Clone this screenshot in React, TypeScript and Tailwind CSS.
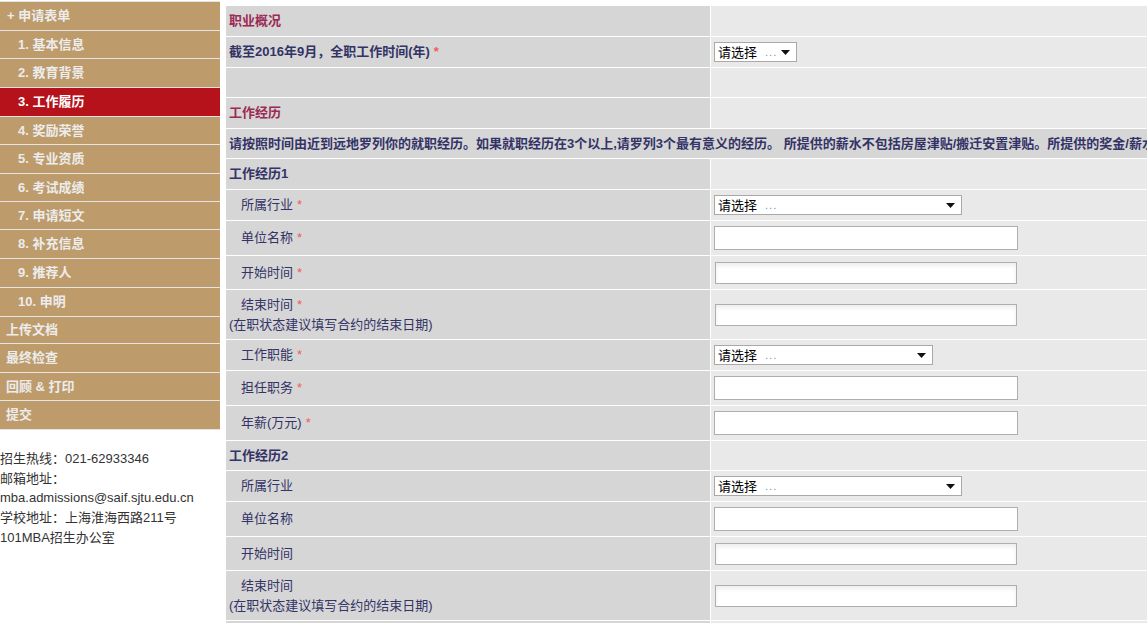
const menuItems = [
  { label: "+ 申请表单", indent: false, h: "h-[29px]", plus: true },
  { label: "1. 基本信息", indent: true, h: "h-[28px]" },
  { label: "2. 教育背景", indent: true, h: "h-[29px]" },
  { label: "3. 工作履历", indent: true, h: "h-[29px]", active: true },
  { label: "4. 奖励荣誉", indent: true, h: "h-[28px]" },
  { label: "5. 专业资质", indent: true, h: "h-[29px]" },
  { label: "6. 考试成绩", indent: true, h: "h-[28px]" },
  { label: "7. 申请短文", indent: true, h: "h-[28px]" },
  { label: "8. 补充信息", indent: true, h: "h-[29px]" },
  { label: "9. 推荐人", indent: true, h: "h-[29px]" },
  { label: "10. 申明", indent: true, h: "h-[29px]" },
  { label: "上传文档", indent: false, h: "h-[27px]" },
  { label: "最终检查", indent: false, h: "h-[29px]" },
  { label: "回顾 & 打印", indent: false, h: "h-[28px]" },
  { label: "提交", indent: false, h: "h-[29px]" },
];

function Star() {
  return <span className="ml-[4px] text-[#f25c5c]">*</span>;
}

function FakeSelect({ width }: { width: string }) {
  return (
    <div
      className={`${width} flex h-[20px] items-center border border-[#a9a9a9] bg-white pl-[3px] pr-[6px] text-[13px] leading-none text-black`}
    >
      <span>请选择</span>
      <span className="ml-[8px] text-[11px] tracking-[1px] text-[#5b9bd5]">...</span>
      <svg className="ml-auto" width="9" height="5" viewBox="0 0 9 5">
        <path d="M0 0h9L4.5 5z" fill="#111" />
      </svg>
    </div>
  );
}

function TextInput() {
  return <div className="h-[24px] w-[304px] border border-[#aeaeae] bg-white" />;
}

function DateInput() {
  return (
    <div className="ml-[1px] h-[22px] w-[302px] border border-[#aeaeae] bg-white shadow-[inset_0_3px_4px_rgba(0,0,0,0.07)]" />
  );
}

function Row({
  h,
  left,
  right,
}: {
  h: string;
  left?: React.ReactNode;
  right?: React.ReactNode;
}) {
  return (
    <div className={`flex ${h} shrink-0 border-b border-white`}>
      <div className="flex w-[485px] shrink-0 items-center border-r border-white bg-[#d6d6d6] pl-[3px] text-[13px] leading-[20px] text-[#333366]">
        {left}
      </div>
      <div className="flex min-w-0 flex-1 items-center bg-[#e9e9e9] pl-[3px]">{right}</div>
    </div>
  );
}

function Label({ text, required = true }: { text: string; required?: boolean }) {
  return (
    <span className="pl-[12px]">
      {text}
      {required && <Star />}
    </span>
  );
}

function EndLabel({ required = true }: { required?: boolean }) {
  return (
    <div>
      <div className="pl-[12px]">
        结束时间
        {required && <Star />}
      </div>
      <div>(在职状态建议填写合约的结束日期)</div>
    </div>
  );
}

export default function App() {
  return (
    <div className="flex h-[623px] w-full overflow-hidden bg-white font-['Liberation_Sans','Noto_Sans_CJK_SC',sans-serif]">
      <aside className="w-[220px] shrink-0 pt-[1px]">
        <nav className="border-b border-[#e4e4e4]">
          {menuItems.map((item) => (
            <div
              key={item.label}
              className={`flex ${item.h} items-center border-t border-[#e4e4e4] text-[13px] font-bold ${
                item.active ? "bg-[#b5121b] text-white" : "bg-[#bd9b6b] text-[#ececec]"
              } ${item.indent ? "pl-[18px]" : item.plus ? "pl-[7px]" : "pl-[6px]"}`}
            >
              {item.label}
            </div>
          ))}
        </nav>
        <div className="mt-[19px] text-[13px] leading-[19.7px] text-[#333]">
          <div>招生热线：021-62933346</div>
          <div>邮箱地址：</div>
          <div>mba.admissions@saif.sjtu.edu.cn</div>
          <div>学校地址：上海淮海西路211号</div>
          <div>101MBA招生办公室</div>
        </div>
      </aside>

      <main className="ml-[6px] flex min-w-0 flex-1 flex-col overflow-hidden pt-[6px]">
        <Row h="h-[31px]" left={<span className="font-bold text-[#9b2a55]">职业概况</span>} />
        <Row
          h="h-[31px]"
          left={
            <span className="font-bold">
              截至2016年9月，全职工作时间(年)
              <Star />
            </span>
          }
          right={<FakeSelect width="w-[83px]" />}
        />
        <Row h="h-[30px]" />
        <Row h="h-[31px]" left={<span className="font-bold text-[#9b2a55]">工作经历</span>} />
        <div className="flex h-[30px] shrink-0 items-center overflow-hidden whitespace-nowrap border-b border-white bg-[#d6d6d6] pl-[3px] text-[13px] font-bold text-[#333366]">
          请按照时间由近到远地罗列你的就职经历。如果就职经历在3个以上,请罗列3个最有意义的经历。 所提供的薪水不包括房屋津贴/搬迁安置津贴。所提供的奖金/薪水均为税前金额。
        </div>
        <Row h="h-[31px]" left={<span className="font-bold">工作经历1</span>} />
        <Row h="h-[31px]" left={<Label text="所属行业" />} right={<FakeSelect width="w-[248px]" />} />
        <Row h="h-[35px]" left={<Label text="单位名称" />} right={<TextInput />} />
        <Row h="h-[34px]" left={<Label text="开始时间" />} right={<DateInput />} />
        <Row h="h-[50px]" left={<EndLabel />} right={<DateInput />} />
        <Row h="h-[31px]" left={<Label text="工作职能" />} right={<FakeSelect width="w-[219px]" />} />
        <Row h="h-[35px]" left={<Label text="担任职务" />} right={<TextInput />} />
        <Row h="h-[35px]" left={<Label text="年薪(万元)" />} right={<TextInput />} />
        <Row h="h-[30px]" left={<span className="font-bold">工作经历2</span>} />
        <Row h="h-[31px]" left={<Label text="所属行业" required={false} />} right={<FakeSelect width="w-[248px]" />} />
        <Row h="h-[35px]" left={<Label text="单位名称" required={false} />} right={<TextInput />} />
        <Row h="h-[34px]" left={<Label text="开始时间" required={false} />} right={<DateInput />} />
        <Row h="h-[50px]" left={<EndLabel required={false} />} right={<DateInput />} />
        <Row h="h-[31px]" left={<Label text="工作职能" required={false} />} right={<FakeSelect width="w-[219px]" />} />
        <Row h="h-[35px]" left={<Label text="担任职务" required={false} />} right={<TextInput />} />
      </main>
    </div>
  );
}
